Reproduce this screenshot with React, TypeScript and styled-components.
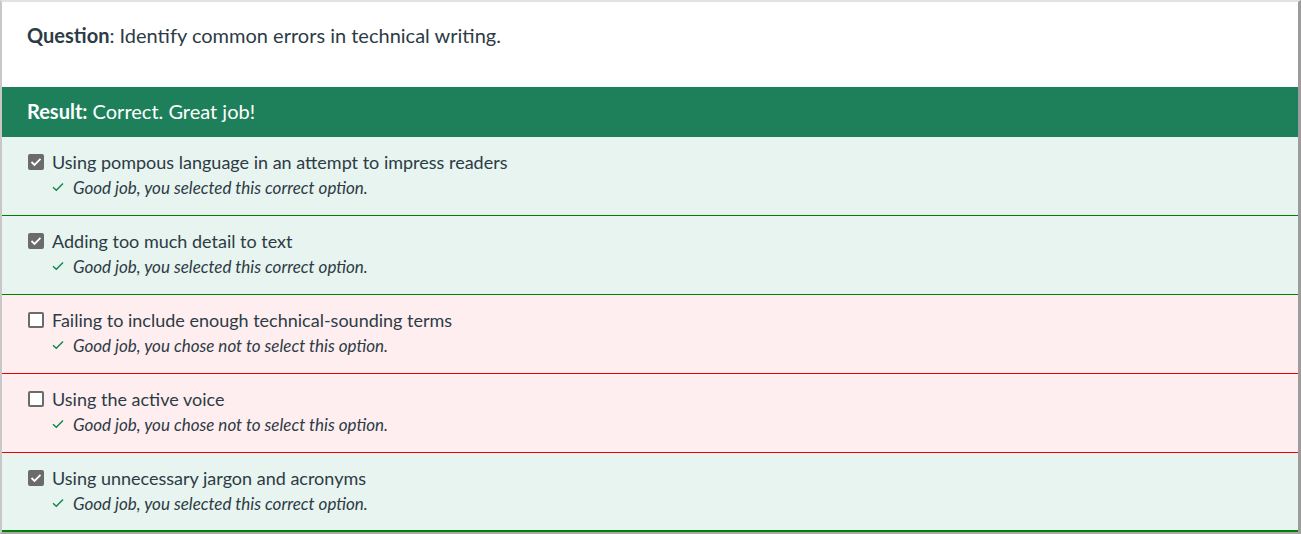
import React from "react";
import styled, { createGlobalStyle } from "styled-components";

const Global = createGlobalStyle`
  html, body { margin: 0; padding: 0; background: #ffffff; }
  body { font-family: Lato, "Noto Sans", sans-serif; color: #2d3b45; }
`;

const Card = styled.div`
  width: 1301px;
  height: 534px;
  box-sizing: border-box;
  border-top: 2px solid #e2e2e2;
  border-left: 2px solid #c8c8c8;
  border-right: 3px solid #9c9c9c;
  border-bottom: 2px solid #a8a8a8;
  display: flex;
  flex-direction: column;
  background: #fff;
  overflow: hidden;
`;

const QuestionBox = styled.div`
  height: 85px;
  flex: none;
  box-sizing: border-box;
  padding: 19px 0 0 25px;
  font-size: 20px;
  line-height: 28px;
  color: #2d3b45;
`;

const Bold = styled.strong`
  font-weight: 700;
`;

const ResultBar = styled.div`
  height: 50px;
  flex: none;
  box-sizing: border-box;
  background: #1d805a;
  color: #ffffff;
  display: flex;
  align-items: center;
  padding: 0 0 2px 25px;
  font-size: 20px;
`;

const Row = styled.div<{ $ok: boolean; $last?: boolean }>`
  height: 79px;
  flex: none;
  box-sizing: border-box;
  background: ${(p) => (p.$ok ? "#e7f4ef" : "#ffeef0")};
  border-bottom: ${(p) => (p.$last ? 2 : 1)}px solid ${(p) => (p.$ok ? "#008000" : "#ee0000")};
  padding: 14px 0 0 26px;
  display: flex;
  flex-direction: column;
`;

const Line = styled.div`
  display: flex;
  align-items: center;
  gap: 8px;
  height: 22px;
  font-size: 18px;
  color: #2d3b45;
`;

const Box = styled.span<{ $checked: boolean }>`
  width: 16px;
  height: 16px;
  box-sizing: border-box;
  border-radius: 2px;
  background: ${(p) => (p.$checked ? "#6b6b6b" : "#ffffff")};
  border: 2px solid #6b6b6b;
  display: inline-flex;
  align-items: center;
  justify-content: center;
  flex: none;
`;

const Feedback = styled.div`
  display: flex;
  align-items: center;
  gap: 9px;
  margin-top: 4px;
  padding-left: 24px;
  height: 20px;
  font-size: 17px;
  font-style: italic;
  color: #2d3b45;
`;

const Check = () => (
  <svg width="12" height="10" viewBox="0 0 12 10">
    <path d="M1 5.2 L4.3 8.3 L11 1.5" fill="none" stroke="#0b874b" strokeWidth="1.4" />
  </svg>
);

const BoxCheck = () => (
  <svg width="12" height="10" viewBox="0 0 12 10">
    <path d="M1.5 5 L4.5 8 L10.5 1.8" fill="none" stroke="#ffffff" strokeWidth="1.8" />
  </svg>
);

const items = [
  { label: "Using pompous language in an attempt to impress readers", checked: true, ok: true, fb: "Good job, you selected this correct option." },
  { label: "Adding too much detail to text", checked: true, ok: true, fb: "Good job, you selected this correct option." },
  { label: "Failing to include enough technical-sounding terms", checked: false, ok: false, fb: "Good job, you chose not to select this option." },
  { label: "Using the active voice", checked: false, ok: false, fb: "Good job, you chose not to select this option." },
  { label: "Using unnecessary jargon and acronyms", checked: true, ok: true, fb: "Good job, you selected this correct option." },
];

export default function App() {
  return (
    <>
      <Global />
      <Card>
        <QuestionBox>
          <Bold>Question</Bold>: Identify common errors in technical writing.
        </QuestionBox>
        <ResultBar>
          <Bold>Result:</Bold>&nbsp;Correct. Great job!
        </ResultBar>
        {items.map((it, i) => (
          <Row key={i} $ok={it.ok} $last={i === items.length - 1}>
            <Line>
              <Box $checked={it.checked}>{it.checked && <BoxCheck />}</Box>
              {it.label}
            </Line>
            <Feedback>
              <Check />
              {it.fb}
            </Feedback>
          </Row>
        ))}
      </Card>
    </>
  );
}
